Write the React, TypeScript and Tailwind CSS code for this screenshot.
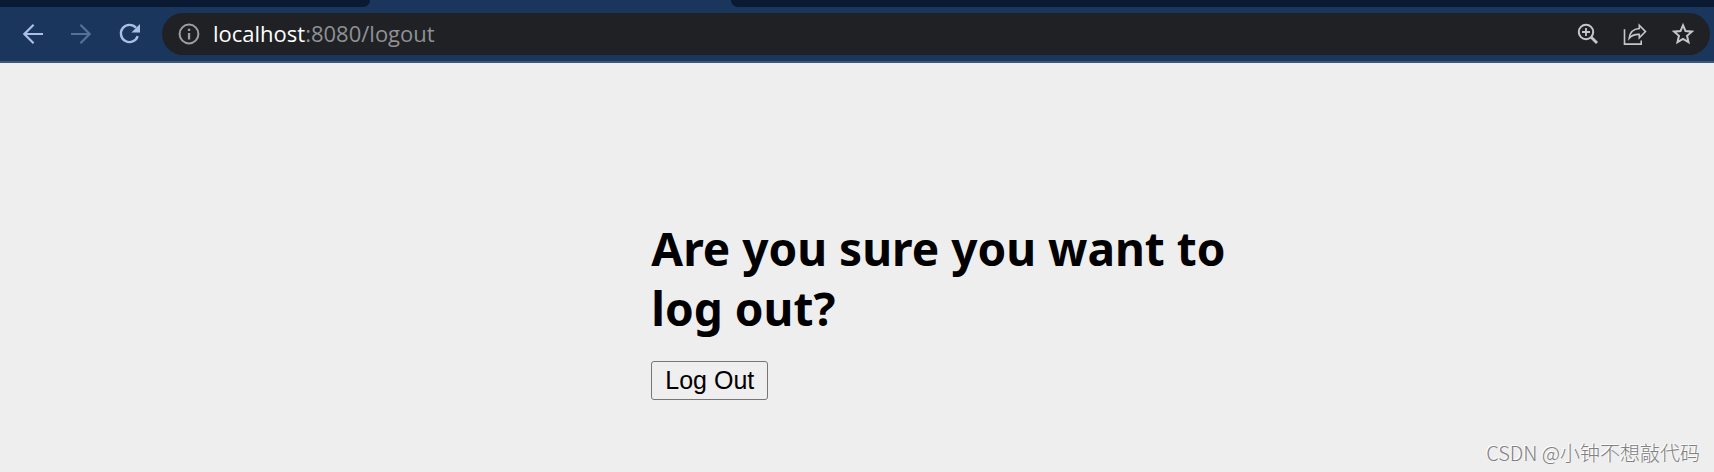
import { useState } from 'react'

function BackIcon() {
  return (
    <svg width="20" height="20" viewBox="0 0 20 20" fill="none" stroke="currentColor" strokeWidth="2.2">
      <path d="M20 10H1.8M10.6 .8L1.4 10l9.2 9.2" />
    </svg>
  )
}

function ForwardIcon() {
  return (
    <svg width="20" height="20" viewBox="0 0 20 20" fill="none" stroke="currentColor" strokeWidth="2.2">
      <path d="M0 10h18.2M9.4 .8l9.2 9.2-9.2 9.2" />
    </svg>
  )
}

function ReloadIcon() {
  return (
    <svg width="22" height="22" viewBox="0 0 22 22">
      <path d="M18.7 13.2A8.6 8.6 0 1 1 17 4.8" fill="none" stroke="currentColor" strokeWidth="2.4" />
      <path d="M21 1v8.6h-8.6z" fill="currentColor" />
    </svg>
  )
}

function InfoIcon() {
  return (
    <svg width="22" height="22" viewBox="0 0 22 22" className="text-[#9aa0a6]">
      <circle cx="11" cy="11" r="9.4" fill="none" stroke="currentColor" strokeWidth="2" />
      <path d="M9.9 10h2.3v6.4H9.9zM9.9 5.8h2.3V8H9.9z" fill="currentColor" />
    </svg>
  )
}

function ZoomIcon() {
  return (
    <svg width="22" height="22" viewBox="0 0 22 22" fill="none" stroke="currentColor">
      <circle cx="9" cy="9" r="7.2" strokeWidth="2" />
      <path d="M9 5v8M5 9h8" strokeWidth="1.8" />
      <path d="M14 14l6 6" strokeWidth="2.8" />
    </svg>
  )
}

function ShareIcon() {
  return (
    <svg width="24" height="24" viewBox="0 0 24 24" fill="none" stroke="currentColor" strokeWidth="1.6">
      <path d="M1.5 7.2v14.9h16.7v-3.6" />
      <path d="M16.3 3.2l6.2 6.4-6.2 6.3v-3.5c-4.6-.2-7.8 1-10.1 3.8.6-5.600 4-9.200 10.100-9.700z" />
    </svg>
  )
}

function StarIcon() {
  return (
    <svg width="24" height="24" viewBox="0 0 24 24" fill="none" stroke="currentColor" strokeWidth="2">
      <path d="M12 3.200l2.500 5.900 6.400.550-4.850 4.200 1.450 6.250L12 16.800l-5.500 3.300 1.450-6.250L3.100 9.650l6.400-.55z" />
    </svg>
  )
}

function BrowserBar() {
  return (
    <header>
      {/* Bottom edge of the tab strip, active tab second */}
      <div className="flex h-[7px] bg-[#1a365d]">
        <div className="w-[370px] rounded-br-lg bg-[#0a1a33]" />
        <div className="w-[361px]" />
        <div className="flex-1 rounded-bl-lg bg-[#0a1a33]" />
      </div>

      <div className="flex items-center border-b-2 border-[#3f5779] bg-[#1a365d] pt-1.5 pr-1 pb-1.5 pl-[23px] text-[#a9bfe3]">
        <nav className="flex items-center gap-7">
          <button type="button" aria-label="Back"><BackIcon /></button>
          <button type="button" aria-label="Forward" disabled className="text-[#56709a]"><ForwardIcon /></button>
          <button type="button" aria-label="Reload"><ReloadIcon /></button>
        </nav>

        <div className="ml-[21px] flex h-[42px] flex-1 items-center rounded-full bg-[#202124] pr-[15px] pl-4 text-[#c4c7c9]">
          <button type="button" aria-label="Site information"><InfoIcon /></button>
          <a href="/logout" className="ml-[13px] flex-1 pb-0.5 font-['Open_Sans',sans-serif] text-[22px] leading-7 text-[#8f9194]">
            <span className="text-white">localhost</span>:8080/logout
          </a>
          <div className="flex items-center gap-6">
            <button type="button" aria-label="Zoom"><ZoomIcon /></button>
            <button type="button" aria-label="Share this page"><ShareIcon /></button>
            <button type="button" aria-label="Bookmark this page"><StarIcon /></button>
          </div>
        </div>
      </div>
    </header>
  )
}

export default function App() {
  const [loggedOut, setLoggedOut] = useState(false)

  return (
    <div className="flex min-h-screen flex-col bg-[#eeeeee]">
      <BrowserBar />

      <main className="ml-[38%] max-w-[600px] flex-1 pt-[155px]">
        <h2 className="font-['Noto_Sans',sans-serif] text-[46px] leading-[60px] font-bold text-black">
          Are you sure you want to log out?
        </h2>
        <form className="mt-[23px]" onSubmit={(e) => { e.preventDefault(); setLoggedOut(true) }}>
          <button
            type="submit"
            disabled={loggedOut}
            className="rounded-[3px] border border-[#767676] bg-[#efefef] px-[13px] py-1 font-['Liberation_Sans',sans-serif] text-[25px] leading-[29px] text-black"
          >
            Log Out
          </button>
        </form>
      </main>

      <footer className="pr-[14px] pb-[5px] text-right font-['Noto_Sans_CJK_SC',sans-serif] text-[20px] leading-7 font-light text-[#808080] [text-shadow:-1px_-1px_0_#ffffff]">
        CSDN @小钟不想敲代码
      </footer>
    </div>
  )
}
